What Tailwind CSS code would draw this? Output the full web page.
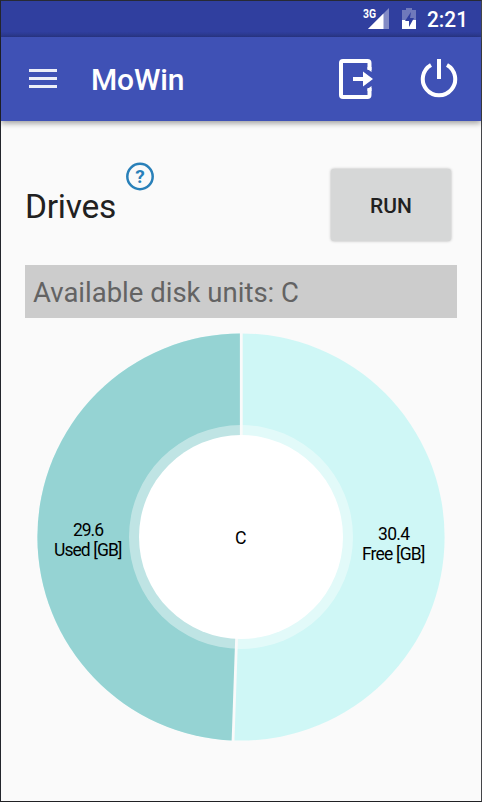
<!DOCTYPE html>
<html lang="en">
<head>
<meta charset="utf-8">
<title>MoWin</title>
<script src="https://cdn.jsdelivr.net/npm/@tailwindcss/browser@4"></script>
</head>
<body class="overflow-hidden bg-[#fafafa]">
<div class="flex h-[802px] w-[482px] flex-col border border-t-[#272a35] border-r-[#444548] border-b-[#202124] border-l-[#23252c] bg-[#fafafa] font-[Roboto,sans-serif]">
  <div class="flex h-9 shrink-0 items-center justify-end bg-linear-to-b from-[#303f9f] from-85% to-[#2b388c] pr-2.5 text-white">
    <svg class="h-9 w-[110px]" viewBox="361 1 110 36">
      <path d="M389 8V29H368Z" fill="#838bc5"/>
      <path d="M383.500 13.500V29H368Z" fill="#fff"/>
      <path d="M361 6H376V19H361Z" fill="#303f9f"/>
      <text x="363" y="18" font-size="12.500" font-weight="700" fill="#fff" textLength="13" lengthAdjust="spacingAndGlyphs">3G</text>
      <path d="M406 8h6V10h4v19h-14V10h4Z" fill="#6f79bb"/>
      <path d="M402 20h14v9h-14Z" fill="#fff"/>
      <path d="M411 12L405 21H409V27L414 18H410Z" fill="#303f9f"/>
      <text x="427" y="27" font-size="22" font-weight="500" fill="#fff" textLength="41" lengthAdjust="spacingAndGlyphs">2:21</text>
    </svg>
  </div>
  <header class="z-10 flex h-[84px] shrink-0 items-center bg-[#3f51b5] pr-[23px] pl-7 text-white shadow-[0_2px_6px_rgba(0,0,0,0.4)]">
    <svg class="mb-0.5 h-[21px] w-7" viewBox="0 0 28 21"><path d="M0 2.500H28M0 10.500H28M0 18.500H28" stroke="#fff" stroke-opacity=".9" stroke-width="3"/></svg>
    <h1 class="ml-[34px] text-[30px] leading-[35px] font-medium tracking-[-0.15px]">MoWin</h1>
    <svg class="ml-auto h-[42px] w-[36px]" viewBox="338 58 36 42">
      <path d="M369.500 70V63Q369.500 61 367.500 61H343Q341 61 341 63V95Q341 97 343 97H367.500Q369.500 97 369.500 95V88" fill="none" stroke="#fff" stroke-width="4"/>
      <path d="M367.500 69L371.500 72V67H367.500ZM367.500 89L371.500 86V91H367.500Z" fill="#fff"/>
      <path d="M353 77H363V71.500L373 79L363 86.500V81H353Z" fill="#fff"/>
    </svg>
    <svg class="ml-[46px] h-[42px] w-[38px]" viewBox="420 58 38 42" fill="none" stroke="#fff" stroke-width="4">
      <path d="M431 65A16.200 16.200 0 1 0 447 65M439 59V79"/>
    </svg>
  </header>
  <main class="px-6 pt-[41px]">
    <div class="flex h-[103px] items-start">
      <h2 class="mt-[25px] text-[33.500px] leading-[40px] tracking-[-0.25px] text-[#212121]">Drives</h2>
      <svg class="ml-2.5 h-[29px] w-[28px]" viewBox="0 0 28 29">
        <circle cx="14" cy="14.500" r="12.700" fill="none" stroke="#2980b9" stroke-width="2.500"/>
        <text x="14" y="21" text-anchor="middle" font-size="19" font-weight="700" fill="#2980b9">?</text>
      </svg>
      <button class="mt-[7px] mr-1.5 ml-auto h-[72px] w-[120px] rounded-[3px] bg-[#d6d7d7] pt-1 text-[21px] font-medium text-[#212121] shadow-[0_0_3px_rgba(0,0,0,0.3)]">RUN</button>
    </div>
    <div class="h-[53px] bg-[#cccccc] px-2 text-[27.500px] leading-[56px] whitespace-nowrap text-[#636363]">Available disk units: C</div>
    <svg class="mt-[14px] h-[410px] w-[432px]" viewBox="25 332 432 410" fill="#000">
      <circle cx="241" cy="537" r="203.600" fill="#cff7f6"/>
      <path d="M241 333.400A203.600 203.600 0 0 0 37.400 537A203.600 203.600 0 0 0 232.800 740.430L241 537Z" fill="#95d3d3"/>
      <circle cx="241" cy="537" r="112" fill="#fff" fill-opacity=".4"/>
      <path d="M241.300 332V436M236.600 638L233 742" stroke="#fafafa" stroke-width="2.800"/>
      <circle cx="241" cy="537" r="102" fill="#fff"/>
      <text x="73" y="535.500" font-size="17.500" textLength="31">29.6</text>
      <text x="54" y="555.500" font-size="17.500" textLength="68.500">Used [GB]</text>
      <text x="378" y="539.500" font-size="17.500" textLength="32">30.4</text>
      <text x="362" y="559.500" font-size="17.500" textLength="63.500">Free [GB]</text>
      <text x="235" y="544" font-size="18" textLength="11.500" lengthAdjust="spacingAndGlyphs">C</text>
    </svg>
  </main>
</div>
</body>
</html>
